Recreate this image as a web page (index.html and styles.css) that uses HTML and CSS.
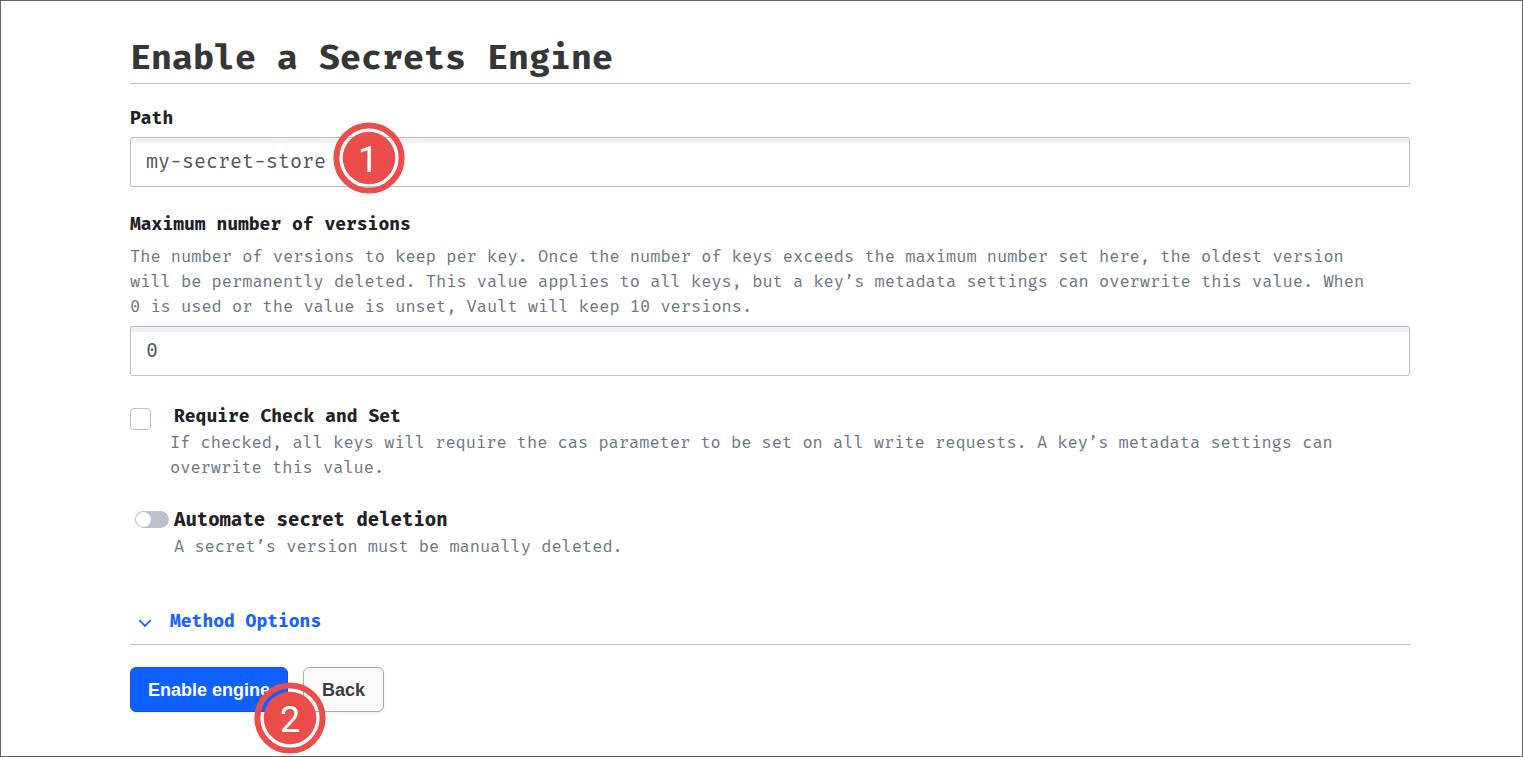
FILE: index.html
```html
<!DOCTYPE html>
<html lang="en">
<head>
<meta charset="utf-8">
<title>Enable a Secrets Engine</title>
<link rel="stylesheet" href="styles.css">
</head>
<body>
<main class="page">
  <h1 class="title">Enable a Secrets Engine</h1>
  <form class="form">
    <div class="field">
      <label class="label" for="path">Path</label>
      <div class="control">
        <input class="input" id="path" type="text" value="my-secret-store">
        <svg class="badge badge-path" viewBox="0 0 72 72" aria-label="Step 1">
          <circle class="badge-ring" cx="36" cy="36" r="32.6"/>
          <circle class="badge-disc" cx="36" cy="36" r="26.3"/>
          <text class="badge-text" x="35" y="50">1</text>
        </svg>
      </div>
    </div>
    <div class="field">
      <label class="label" for="versions">Maximum number of versions</label>
      <p class="help help-spaced" id="versions-help">The number of versions to keep per key. Once the number of keys exceeds the maximum number set here, the oldest version<br>will be permanently deleted. This value applies to all keys, but a key’s metadata settings can overwrite this value. When<br>0 is used or the value is unset, Vault will keep 10 versions.</p>
      <input class="input" id="versions" type="text" value="0" aria-describedby="versions-help">
    </div>
    <div class="check-row">
      <input class="checkbox" id="cas" type="checkbox">
      <div>
        <label class="label label-inset" for="cas">Require Check and Set</label>
        <p class="help">If checked, all keys will require the cas parameter to be set on all write requests. A key’s metadata settings can<br>overwrite this value.</p>
      </div>
    </div>
    <div class="toggle-row">
      <input class="toggle" id="automate" type="checkbox" role="switch">
      <div>
        <label class="label label-large" for="automate">Automate secret deletion</label>
        <p class="help">A secret’s version must be manually deleted.</p>
      </div>
    </div>
    <div class="options">
      <button class="options-button" type="button">
        <svg class="chevron" viewBox="0 0 16 16" aria-hidden="true"><path d="M2.3 5.2 8 10.900l5.700-5.700"/></svg>
        Method Options
      </button>
    </div>
    <div class="actions">
      <div class="control">
        <button class="button button-primary" type="submit">Enable engine</button>
        <svg class="badge badge-submit" viewBox="0 0 72 72" aria-label="Step 2">
          <circle class="badge-ring" cx="36" cy="36" r="32.6"/>
          <circle class="badge-disc" cx="36" cy="36" r="26.3"/>
          <text class="badge-text" x="36" y="50">2</text>
        </svg>
      </div>
      <button class="button" type="button">Back</button>
    </div>
  </form>
</main>
</body>
</html>
```
FILE: styles.css
```css
* {
  box-sizing: border-box;
}

body {
  margin: 0;
  background: #fff;
  color: #1f2124;
  font-family: "Fira Mono", "DejaVu Sans Mono", monospace;
}

.page {
  min-height: 100vh;
  padding: 32px 112px 0 129px;
  border: 1px solid #666;
}

.title {
  margin: 0 0 22px;
  padding-bottom: 2px;
  border-bottom: 1px solid #bac1cc;
  color: #363636;
  font-size: 35px;
  line-height: 48px;
}

.field {
  margin-bottom: 25px;
}

.label {
  display: block;
  width: fit-content;
  font-size: 18px;
  font-weight: 700;
  line-height: 24px;
}

.label-inset {
  margin: 0 0 2px 4px;
}

.label-large {
  font-size: 19px;
  line-height: 28px;
}

.help {
  margin: 0;
  color: #6f7682;
  font-size: 17px;
  line-height: 25px;
}

.help-spaced {
  margin: 8px 0 7px;
}

.control {
  position: relative;
}

.input {
  display: block;
  width: 100%;
  height: 50px;
  margin: 0;
  padding: 0 15px 2px;
  border: 1px solid #bac1cc;
  border-radius: 2px;
  box-shadow: inset 0 5px 0 #f0f0f2;
  background: #fff;
  color: #525761;
  font-family: inherit;
  font-size: 20px;
}

.label + .control {
  margin-top: 7px;
}

.check-row {
  display: flex;
  gap: 19px;
  margin-top: 28px;
}

.checkbox {
  flex: none;
  appearance: none;
  width: 21px;
  height: 22px;
  margin: 4px 0 0;
  border: 1px solid #bac1cc;
  border-radius: 4px;
  background: #fff;
}

.toggle-row {
  display: flex;
  gap: 5px;
  margin: 26px 0 0 5px;
}

.toggle {
  flex: none;
  appearance: none;
  display: flex;
  align-items: center;
  width: 34px;
  height: 17px;
  margin: 5px 0 0;
  padding: 0 1px;
  border-radius: 9px;
  background: #bac1cc;
}

.toggle::before {
  content: "";
  width: 15px;
  height: 15px;
  border-radius: 50%;
  background: #fff;
}

.options {
  margin-top: 48px;
  padding-bottom: 9px;
  border-bottom: 1px solid #bac1cc;
}

.options-button {
  display: flex;
  align-items: center;
  gap: 17px;
  padding: 0 0 0 7px;
  border: 0;
  background: none;
  color: #1563ff;
  font-family: inherit;
  font-size: 18px;
  font-weight: 700;
  line-height: 28px;
}

.chevron {
  width: 16px;
  height: 16px;
  margin-top: 4px;
  fill: none;
  stroke: currentColor;
  stroke-width: 1.8;
}

.actions {
  display: flex;
  gap: 15px;
  margin-top: 22px;
}

.button {
  height: 45px;
  padding: 1px 18px 0;
  border: 1px solid #a9abaf;
  border-radius: 6px;
  box-shadow: 0 2px 2px #0000000d;
  background: #fafafa;
  color: #3b3d45;
  font-family: "Liberation Sans", Arial, sans-serif;
  font-size: 18px;
  font-weight: 700;
}

.button-primary {
  padding: 1px 17px 0;
  border-color: #0c56e9;
  background: #1060ff;
  color: #fff;
}

/* Numbered step markers over the controls */
.badge {
  position: absolute;
  z-index: 1;
  width: 72px;
  height: 72px;
}

.badge-path {
  top: -15px;
  left: 203px;
}

.badge-submit {
  top: 15px;
  left: 124px;
}

.badge-ring {
  fill: none;
  stroke: #eb4d4b;
  stroke-width: 6;
}

.badge-disc {
  fill: #eb4d4b;
}

.badge-text {
  fill: #fff;
  font-family: Roboto, sans-serif;
  font-size: 36px;
  text-anchor: middle;
}
```
